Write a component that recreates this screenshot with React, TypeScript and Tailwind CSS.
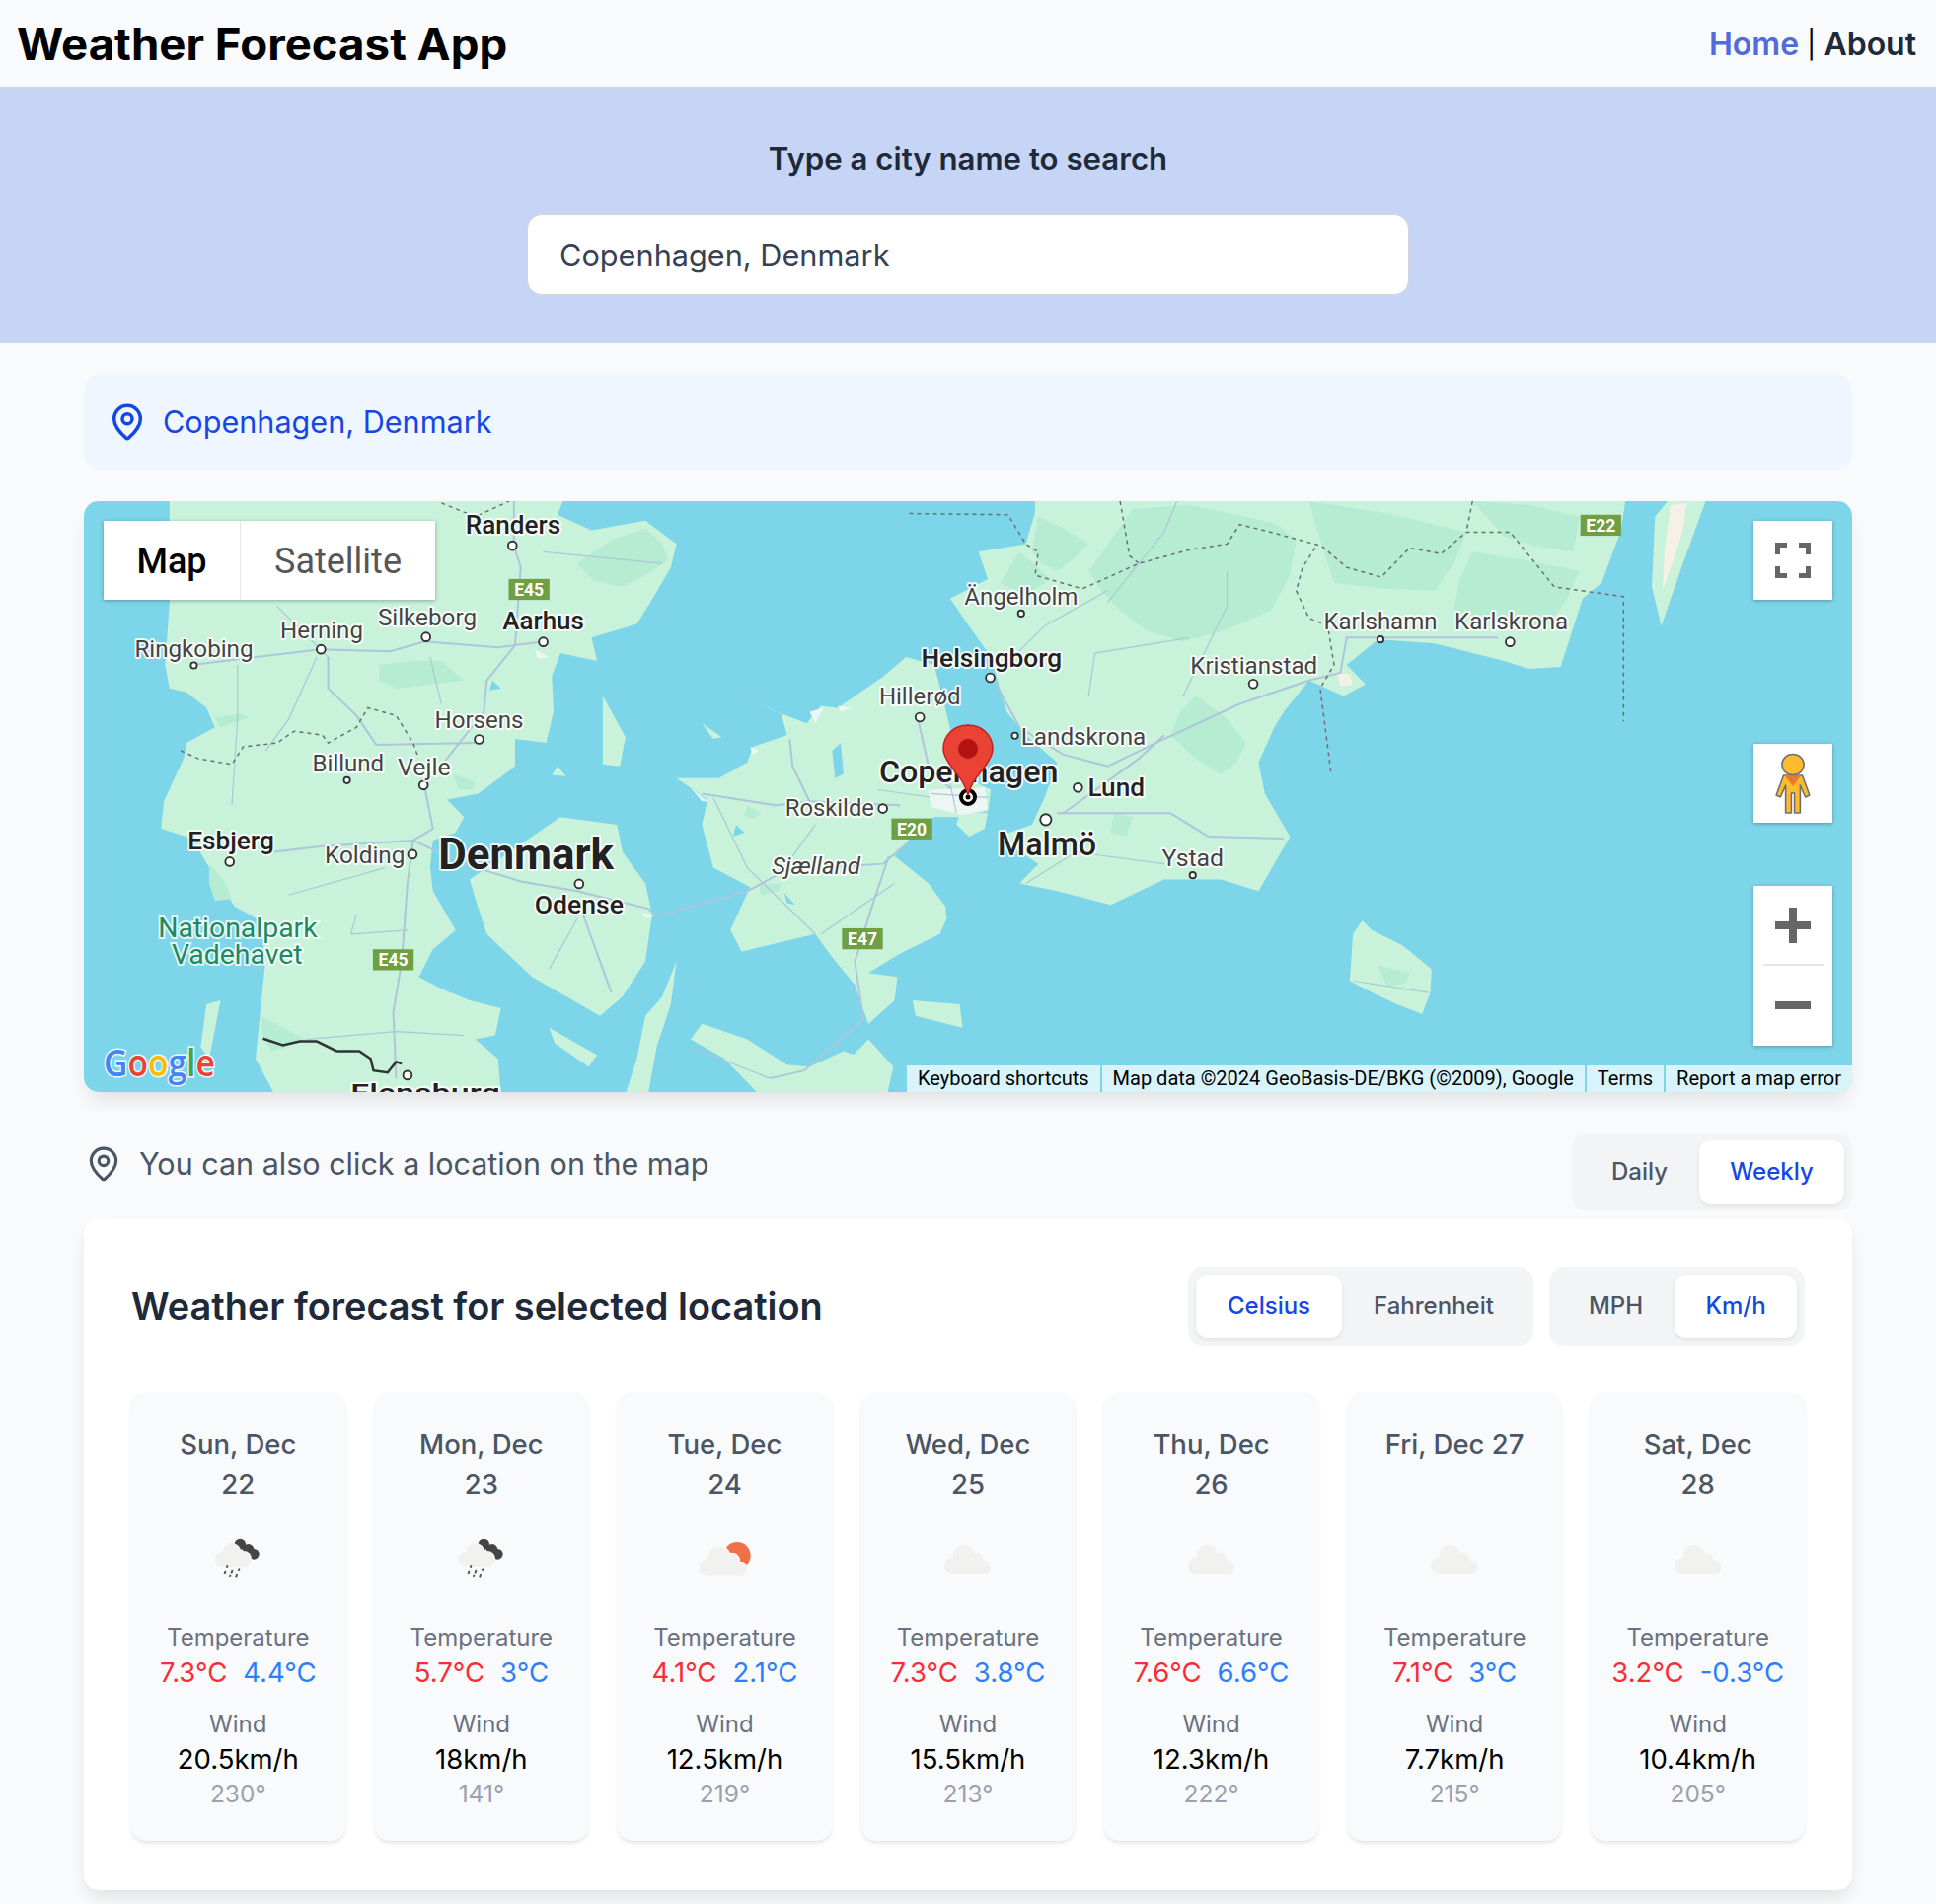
import React from 'react';
import { MapPin } from 'lucide-react';

interface Day {
  date: string; icon: 'rain' | 'sun' | 'cloud'; hi: string; lo: string; wind: string; deg: string;
}

const days: Day[] = [
  { date: 'Sun, Dec 22', icon: 'rain', hi: '7.3°C', lo: '4.4°C', wind: '20.5km/h', deg: '230°' },
  { date: 'Mon, Dec 23', icon: 'rain', hi: '5.7°C', lo: '3°C', wind: '18km/h', deg: '141°' },
  { date: 'Tue, Dec 24', icon: 'sun', hi: '4.1°C', lo: '2.1°C', wind: '12.5km/h', deg: '219°' },
  { date: 'Wed, Dec 25', icon: 'cloud', hi: '7.3°C', lo: '3.8°C', wind: '15.5km/h', deg: '213°' },
  { date: 'Thu, Dec 26', icon: 'cloud', hi: '7.6°C', lo: '6.6°C', wind: '12.3km/h', deg: '222°' },
  { date: 'Fri, Dec 27', icon: 'cloud', hi: '7.1°C', lo: '3°C', wind: '7.7km/h', deg: '215°' },
  { date: 'Sat, Dec 28', icon: 'cloud', hi: '3.2°C', lo: '-0.3°C', wind: '10.4km/h', deg: '205°' },
];

// map geometry, traced from the picture: group A covers the danish half, group B the swedish half
const landA = [
  '160,0 860,0 845,55 905,95 1000,70 1055,130 1045,190 1015,265 985,335 905,370 915,430 850,410 835,470 838,560 825,640 770,630 770,700 705,770 650,785 680,830 665,870 625,890 620,960 625,1020 645,1070 665,1120 625,1170 600,1240 640,1270 690,1300 745,1320 735,1390 700,1400 740,1450 745,1540 345,1540 312,1450 322,1300 330,1190 320,1095 275,1060 230,960 200,885 145,860 150,790 185,680 190,640 240,600 225,550 190,510 160,500 152,440 160,280',
  '690,990 760,920 850,830 950,850 960,920 1000,1000 1012,1080 1000,1200 960,1290 920,1340 860,1290 800,1240 720,1130 700,1040',
  '1165,520 1250,570 1285,590 1310,545 1340,550 1420,470 1460,420 1510,440 1538,600 1540,710 1610,760 1605,815 1550,830 1510,830 1470,880 1440,930 1500,1000 1530,1060 1532,1090 1520,1130 1450,1180 1394,1230 1445,1240 1440,1300 1394,1360 1390,1345 1370,1260 1330,1190 1300,1130 1170,1175 1150,1120 1185,1010 1120,960 1100,850 1110,785 1055,730 1130,730 1180,690 1190,650 1250,620 1240,565',
  '1472,1300 1555,1310 1560,1370 1477,1340',
  '1394,1400 1438,1470 1427,1540 1300,1540',
  '1080,1400 1100,1360 1180,1400 1250,1465 1290,1470 1350,1430 1390,1450 1350,1540 1200,1540 1140,1450',
  '1055,1200 1030,1290 1000,1340 985,1450 965,1540 1005,1540 1020,1420 1045,1310',
  '830,1370 915,1440 900,1470 840,1410',
  '925,520 965,625 955,700 925,695 925,620',
  '1100,590 1135,625 1120,630',
  '845,700 860,725 835,722',
  '225,1310 250,1300 230,1450 215,1420',
];

const forestA = [
  '880,180 940,120 1000,90 1030,130 1040,170 1000,210 960,240 910,225',
  '530,440 590,430 640,430 680,480 620,490 560,500 530,480',
  '230,950 255,990 270,1040 240,1045 230,1000',
  '1180,800 1205,820 1190,835 1175,825',
  '1200,1000 1240,1000 1235,1020 1205,1030',
  '320,1340 360,1370 400,1400 365,1420 340,1430 325,1390',
  '240,575 285,565 300,575 250,600',
  '660,720 700,740 695,760 670,760',
];

// small inlets and the pale sand flecks on the coast
const waterA = [
  '1160,850 1175,870 1155,880',
  '1245,1025 1265,1055 1250,1050',
  '730,480 745,500 725,505',
  '1330,660 1345,640 1350,720 1335,730',
  '675,1010 690,1030 680,1045',
];

const sandA = [
  '1185,650 1200,660 1190,672',
  '1290,560 1315,550 1300,590',
  '1340,545 1365,550 1345,560',
  '1080,755 1110,790 1100,790',
  '995,1075 1015,1085 1000,1090',
  '805,400 830,420 810,425',
];

const landB = [
  '265,0 1205,0 1195,100 1165,230 1135,270 1100,445 1050,450 1010,430 950,405 900,385 810,375 760,440 790,490 755,520 700,480 660,560 645,600 620,690 630,770 670,880 620,1020 560,990 470,990 385,1055 300,1020 240,1000 270,950 205,880 260,850 280,780 300,690 250,620 220,560 205,480 195,420 160,340 130,270 190,220 175,150 250,130 265,50',
  '145,820 190,820 185,860 160,880 140,850',
  '785,1095 800,1120 850,1160 895,1220 893,1280 880,1335 840,1310 800,1280 765,1250 768,1180 770,1130',
  '1250,60 1280,0 1335,0 1290,200 1260,340 1245,240',
];

const forestB = [
  '420,40 510,30 600,60 650,80 680,120 670,210 640,300 570,350 500,380 440,350 400,300 370,250 350,200 390,110',
  '700,20 820,50 950,100 930,180 900,250 820,245 740,230 720,130',
  '960,150 1040,170 1130,200 1110,270 1080,340 1000,330 930,300 940,220',
  '270,60 310,90 350,130 325,170 300,200 275,180 260,150',
  '520,520 565,570 600,640 585,690 560,720 520,680 480,620 495,560',
  '390,820 420,830 410,880 385,870',
  '810,1210 860,1230 855,1255 825,1265',
  '960,20 1050,30 1130,60 1120,150 1060,135 1010,110',
  '240,150 290,220 250,260 210,230',
];

const sandB = [
  '1275,30 1300,25 1295,90 1280,170 1262,250 1265,150',
  '745,460 765,465 770,490 750,495',
];

const mainRoadsA = [
  '768,0 768,135 780,190 770,390 720,480 715,560 650,680 610,750 625,860 590,890 580,1000 570,1200 555,1330 560,1500',
  '200,440 425,400 550,405 610,380 740,395 820,380',
  '440,420 440,500 490,570 525,645 700,640',
  '340,920 430,905 590,890',
  '590,890 680,950 780,995 880,1020 1005,1065 1020,1085 1180,1020 1250,965 1420,950 1460,900',
  '890,1080 940,1280',
  '1100,770 1230,800 1290,790 1260,700 1255,630',
  '1450,800 1290,790',
  '1430,930 1400,1060 1370,1200 1385,1350 1280,1480 1220,1500',
  '1480,570 1500,700 1560,790',
];

const minorRoadsA = [
  '400,1400 560,1380 680,1390',
  '280,440 280,580 270,800',
  '1080,1420 1220,1500',
  '350,290 440,420',
  '620,420 640,540',
  '830,1220 880,1090',
  '1120,780 1180,960 1300,1130',
  '1300,850 1250,950',
  '1440,1000 1310,1130',
  '480,1130 580,1120',
  '370,1030 540,960',
  '490,1080 480,1130',
  '420,420 370,580 330,660',
  '820,150 1030,180',
  '1410,760 1605,800',
];

const mainRoadsB = [
  '200,480 240,600 310,670 380,700 470,630 590,540 700,480 750,460 760,370 1000,370',
  '300,820 480,820 540,880 660,885',
  '310,820 430,680 470,620',
];

const minorRoadsB = [
  '250,1000 290,960 330,920 470,950',
  '380,250 280,340 230,420',
  '510,370 360,410 350,520',
  '490,20 470,100 380,280',
  '770,1250 890,1280',
  '100,770 190,780',
  '130,745 140,820',
  '570,200 570,290 500,520',
];

const labels = [
  { t: 'Randers', x: 377, y: 432, w: 77, s: 20, b: 500 },
  { t: 'Aarhus', x: 407, y: 510, w: 66, s: 21, b: 500 },
  { t: 'Silkeborg', x: 306, y: 507, w: 80, s: 19, b: 400 },
  { t: 'Herning', x: 227, y: 517, w: 67, s: 19, b: 400 },
  { t: 'Ringkobing', x: 109, y: 532, w: 96, s: 19, b: 400 },
  { t: 'Horsens', x: 352, y: 590, w: 72, s: 19, b: 400 },
  { t: 'Billund', x: 253, y: 625, w: 58, s: 19, b: 400 },
  { t: 'Vejle', x: 322, y: 628, w: 43, s: 19, b: 400 },
  { t: 'Esbjerg', x: 152, y: 688, w: 70, s: 21, b: 500 },
  { t: 'Kolding', x: 263, y: 699, w: 65, s: 19, b: 400 },
  { t: 'Denmark', x: 355, y: 704, w: 142, s: 35, b: 700 },
  { t: 'Odense', x: 433, y: 740, w: 72, s: 21, b: 500 },
  { t: 'Flensburg', x: 284, y: 893, w: 121, s: 21, b: 500 },
  { t: 'Roskilde', x: 636, y: 661, w: 72, s: 19, b: 400 },
  { t: 'Hillerød', x: 712, y: 571, w: 66, s: 19, b: 400 },
  { t: 'Helsingborg', x: 746, y: 540, w: 114, s: 21, b: 500 },
  { t: 'Ängelholm', x: 781, y: 490, w: 92, s: 19, b: 400 },
  { t: 'Landskrona', x: 827, y: 603, w: 101, s: 19, b: 400 },
  { t: 'Copenhagen', x: 712, y: 634, w: 145, s: 25, b: 500 },
  { t: 'Lund', x: 881, y: 645, w: 46, s: 21, b: 500 },
  { t: 'Malmö', x: 808, y: 693, w: 80, s: 27, b: 500 },
  { t: 'Ystad', x: 941, y: 702, w: 50, s: 19, b: 400 },
  { t: 'Kristianstad', x: 964, y: 546, w: 103, s: 19, b: 400 },
  { t: 'Karlshamn', x: 1072, y: 510, w: 92, s: 19, b: 400 },
  { t: 'Karlskrona', x: 1178, y: 510, w: 92, s: 19, b: 400 },
];

const dots = [
  [415, 442, 3.5], [440, 520, 3.5], [345, 516, 3.5], [260, 526, 3.5], [157, 539, 2.5], [388, 599, 3.5],
  [281, 632, 2.5], [343, 636, 3.5], [186, 698, 3.5], [334, 692, 3.5], [469, 716, 3.5], [330, 871, 3.5],
  [715, 655, 3.5], [745, 581, 3.5], [802, 549, 3.5], [827, 497, 2.5], [822, 596, 2.5], [873, 638, 3.5],
  [847, 664, 4.5], [966, 709, 2.5], [1015, 554, 3.5], [1118, 518, 2.5], [1223, 520, 3.5],
];

const shields = [
  { t: 'E45', x: 412, y: 469 }, { t: 'E45', x: 302, y: 769 }, { t: 'E20', x: 722, y: 663 },
  { t: 'E47', x: 682, y: 752 }, { t: 'E22', x: 1280, y: 417 },
];

function Lines({ items, width, color }: { items: string[]; width: number; color: string }) {
  return (
    <>
      {items.map((p) => (
        <polyline key={p} points={p} fill="none" stroke={color} strokeWidth={width} vectorEffect="non-scaling-stroke" />
      ))}
    </>
  );
}

function Shapes({ items, fill }: { items: string[]; fill: string }) {
  return (
    <>
      {items.map((p) => <polygon key={p} points={p} fill={fill} />)}
    </>
  );
}

function MapCanvas() {
  return (
    <svg viewBox="85 508 1792 599" className="block h-full w-full">
      <rect x="85" y="508" width="1792" height="600" fill="#7dd5e9" />
      <g transform="translate(80 500) scale(0.574 0.3954)">
        <Shapes items={landA} fill="#c8f2da" />
        <Shapes items={forestA} fill="#b6ecd1" />
        <Shapes items={waterA} fill="#7dd5e9" />
        <Shapes items={sandA} fill="#eef6f3" />
        <Lines items={minorRoadsA} width={1.2} color="#aac8d8" />
        <Lines items={mainRoadsA} width={2} color="#aec5da" />
        <polyline points="180,660 210,680 270,695 290,650 350,640 380,610 430,620 440,640 490,600 510,550 560,570 590,640 600,680" fill="none" stroke="#6b6f73" strokeWidth="1.5" strokeDasharray="4 4" vectorEffect="non-scaling-stroke" />
        <polyline points="640,25 700,60 760,20" fill="none" stroke="#6b6f73" strokeWidth="1.5" strokeDasharray="4 4" vectorEffect="non-scaling-stroke" />
        <polyline points="325,1398 360,1415 390,1405 420,1405 455,1430 495,1430 515,1450 520,1480 545,1485 560,1458 570,1462" fill="none" stroke="#2f3336" strokeWidth="2.5" vectorEffect="non-scaling-stroke" />
      </g>
      <g transform="translate(880 500) scale(0.6378 0.3954)">
        <Shapes items={landB} fill="#c8f2da" />
        <Shapes items={forestB} fill="#b6ecd1" />
        <Shapes items={sandB} fill="#f5f1e6" />
        <polygon points="95,760 185,755 190,810 150,825 100,805" fill="#eef6f3" />
        <Lines items={minorRoadsB} width={1.2} color="#aac8d8" />
        <Lines items={mainRoadsB} width={2} color="#aec5da" />
        <polyline points="65,52 222,55 250,130 270,150 265,210 340,245 430,180 510,145 570,130 590,80 640,100 720,135 760,190 815,215 860,140 910,155 950,100 1020,100 1090,240 1200,265 1200,585" fill="none" stroke="#6b6f73" strokeWidth="1.5" strokeDasharray="4 4" vectorEffect="non-scaling-stroke" />
        <polyline points="400,20 415,160 430,180" fill="none" stroke="#6b6f73" strokeWidth="1.5" strokeDasharray="4 4" vectorEffect="non-scaling-stroke" />
        <polyline points="710,140 690,190 680,250 700,320 730,340 740,440 718,500 735,715" fill="none" stroke="#6b6f73" strokeWidth="1.5" strokeDasharray="4 4" vectorEffect="non-scaling-stroke" />
        <polyline points="960,20 950,100" fill="none" stroke="#6b6f73" strokeWidth="1.5" strokeDasharray="4 4" vectorEffect="non-scaling-stroke" />
      </g>
      <g transform="scale(1.2513)" fontFamily="Roboto, sans-serif">
        {shields.map((s) => (
          <g key={`${s.t}${s.x}`}>
            <rect x={s.x} y={s.y} width="33" height="17" fill="#6f9e43" />
            <text x={s.x + 16.5} y={s.y + 13.5} textAnchor="middle" fontSize="14" fontWeight="700" fill="#fff">{s.t}</text>
          </g>
        ))}
        {dots.map(([x, y, r]) => (
          <circle key={`${x}-${y}`} cx={x} cy={y} r={r} fill="#fff" stroke="#333" strokeWidth="1.5" />
        ))}
        {labels.map((l) => (
          <text key={l.t} x={l.x} y={l.y} fontSize={l.s} fontWeight={l.b} textLength={l.w} lengthAdjust="spacingAndGlyphs" fill={l.b === 400 ? '#444' : '#222'} stroke="#fff" strokeWidth="3" strokeOpacity="0.9" paintOrder="stroke" strokeLinejoin="round">
            {l.t}
          </text>
        ))}
        <g fill="#1d8a5f" stroke="#fff" strokeWidth="3" strokeOpacity="0.8" paintOrder="stroke" fontSize="22">
          <text x="128" y="759" textLength="129" lengthAdjust="spacingAndGlyphs">Nationalpark</text>
          <text x="139" y="781" textLength="106" lengthAdjust="spacingAndGlyphs">Vadehavet</text>
        </g>
        <text x="625" y="708" fontSize="19" fontStyle="italic" textLength="72" lengthAdjust="spacingAndGlyphs" fill="#444" stroke="#fff" strokeWidth="3" strokeOpacity="0.9" paintOrder="stroke">Sjælland</text>
        <text x="84" y="872" fontFamily="'Open Sans', sans-serif" fontSize="30" fontWeight="600" textLength="90" lengthAdjust="spacingAndGlyphs" stroke="#fff" strokeWidth="2.5" strokeOpacity="0.9" paintOrder="stroke">
          <tspan fill="#4285f4">G</tspan><tspan fill="#ea4335">o</tspan><tspan fill="#fbbc05">o</tspan><tspan fill="#4285f4">g</tspan><tspan fill="#34a853">l</tspan><tspan fill="#ea4335">e</tspan>
        </text>
      </g>
      <circle cx="981" cy="808" r="7" fill="#fff" stroke="#000" strokeWidth="4" />
      <circle cx="981" cy="808" r="2.5" fill="#000" />
      <path d="M981 806 C977 790 968 784 962 774 C958 768 956 764 956 759 C956 745 967 735 981 735 C995 735 1006 745 1006 759 C1006 764 1004 768 1000 774 C994 784 985 790 981 806 Z" fill="#ea4335" stroke="#c5221f" strokeWidth="1.5" />
      <circle cx="981" cy="759" r="10" fill="#b31412" />
    </svg>
  );
}

function Pegman() {
  return (
    <svg width="38" height="63" viewBox="0 0 36 63" preserveAspectRatio="none" className="block">
      <path d="M9 23 H27 L34 43 L30 45 L25 33 V61 H19.5 V41 H16.5 V61 H11 V33 L6 45 L2 43 Z" fill="#fdbb2d" stroke="#6f6f6f" strokeWidth="1.5" strokeLinejoin="round" />
      <path d="M10 23 H26 L18 34 Z" fill="#e8792d" />
      <circle cx="18" cy="12" r="10.5" fill="#fdbb2d" stroke="#6f6f6f" strokeWidth="1.5" />
    </svg>
  );
}

function FullscreenIcon() {
  return (
    <svg width="36" height="36" viewBox="0 0 36 36" fill="#666" className="block">
      <path d="M0 0 H12 V5 H5 V12 H0 Z M24 0 H36 V12 H31 V5 H24 Z M0 24 H5 V31 H12 V36 H0 Z M31 24 H36 V36 H24 V31 H31 Z" />
    </svg>
  );
}

function WeatherIcon({ kind }: { kind: Day['icon'] }) {
  return (
    <svg width="120" height="70" viewBox="0 0 360 210" className="block">
      {kind === 'rain' && (
        <g transform="translate(57 0)">
          <g fill="#444">
            <circle cx="130" cy="76" r="17" />
            <circle cx="155" cy="92" r="17" />
            <circle cx="172" cy="106" r="16" />
          </g>
          <g fill="#f1f1ef">
            <circle cx="75" cy="121" r="22" />
            <circle cx="105" cy="100" r="28" />
            <circle cx="141" cy="120" r="24" />
            <rect x="75" y="115" width="75" height="28" />
          </g>
          <g stroke="#555" strokeWidth="6" strokeLinecap="round">
            <path d="M91 141 l-1 3 M106 155 l-2 6 M127 151 l-1 2 M85 158 l-2 6 M100 173 l-1 1 M120 170 l-2 6" />
          </g>
        </g>
      )}
      {kind === 'sun' && (
        <g transform="translate(49 0)">
          <circle cx="170" cy="110" r="41" fill="#f07048" />
          <g fill="#f9fafb" stroke="#f9fafb" strokeWidth="8">
            <circle cx="115" cy="115" r="32" />
            <circle cx="155" cy="125" r="20" />
            <circle cx="180" cy="152" r="20" />
          </g>
          <g fill="#f1f1ef">
            <circle cx="80" cy="147" r="25" />
            <circle cx="115" cy="115" r="32" />
            <circle cx="155" cy="125" r="20" />
            <circle cx="180" cy="152" r="20" />
            <rect x="80" y="130" width="100" height="42" />
          </g>
        </g>
      )}
      {kind === 'cloud' && (
        <g transform="translate(25 0)" fill="#f1f1ef">
          <circle cx="107" cy="141" r="24" />
          <circle cx="142" cy="110" r="32" />
          <circle cx="183" cy="120" r="18" />
          <circle cx="205" cy="145" r="20" />
          <rect x="107" y="125" width="98" height="40" />
        </g>
      )}
    </svg>
  );
}

function Segmented({ items, active }: { items: { label: string; w: string }[]; active: string }) {
  return (
    <div className="flex h-[80px] items-center rounded-[15px] bg-gray-100 px-[8px]">
      {items.map((it) => (
        <div
          key={it.label}
          className={`flex h-[64px] items-center justify-center rounded-[12px] text-[24px] font-medium ${it.w} ${
            it.label === active ? 'bg-white text-blue-700 shadow-[0_2px_4px_rgba(0,0,0,0.08)]' : 'text-gray-600'
          }`}
        >
          {it.label}
        </div>
      ))}
    </div>
  );
}

export default function App() {
  return (
    <div className="min-h-[1930px] bg-gray-50 font-['Inter',sans-serif]">
      <header className="flex h-[88px] items-center justify-between pl-[17px] pr-[20px] pt-[2px]">
        <h1 className="text-[45.6px] font-bold text-black">Weather Forecast App</h1>
        <nav className="flex items-center gap-[8px] text-[32px] font-semibold text-black">
          <span className="text-[#4f6bdc]">Home</span>
          <span className="text-[28px] font-normal">|</span>
          <span className="text-gray-800">About</span>
        </nav>
      </header>

      <section className="flex h-[260px] flex-col items-center bg-[#c6d5f5] pt-[53px]">
        <h2 className="h-[40px] text-[31.2px] font-semibold leading-[40px] text-gray-800">Type a city name to search</h2>
        <input
          readOnly
          value="Copenhagen, Denmark"
          className="mt-[36px] h-[82px] w-[894px] rounded-[15px] border border-gray-300 bg-white px-[32px] text-[30.7px] text-gray-700 outline-none"
        />
      </section>

      <main className="px-[85px] pt-[32px]">
        <div className="flex h-[96px] items-center gap-[16px] rounded-[15px] bg-blue-50 pl-[24px] text-[30.6px] text-blue-700">
          <MapPin size={40} strokeWidth={2.1} />
          <span>Copenhagen, Denmark</span>
        </div>

        <div className="relative mt-[32px] h-[599px] overflow-hidden rounded-[15px] shadow-[0_12px_20px_-4px_rgba(0,0,0,0.1)]">
          <MapCanvas />

          <div className="absolute left-[20px] top-[20px] flex h-[80px] bg-white font-['Roboto',sans-serif] text-[36px] shadow-[0_1px_4px_rgba(0,0,0,0.3)]">
            <div className="flex w-[139px] items-center justify-center border-r border-gray-200 pt-[2px] font-medium text-black">Map</div>
            <div className="flex w-[197px] items-center justify-center pt-[2px] text-[#565656]">Satellite</div>
          </div>

          <div className="absolute left-[1692px] top-[20px] flex h-[80px] w-[80px] items-center justify-center bg-white shadow-[0_1px_4px_rgba(0,0,0,0.3)]">
            <FullscreenIcon />
          </div>

          <div className="absolute left-[1692px] top-[246px] flex h-[80px] w-[80px] items-center justify-center bg-white shadow-[0_1px_4px_rgba(0,0,0,0.3)]">
            <Pegman />
          </div>

          <div className="absolute left-[1692px] top-[390px] flex h-[162px] w-[80px] flex-col items-center bg-white shadow-[0_1px_4px_rgba(0,0,0,0.3)]">
            <div className="relative mt-[22px] h-[36px] w-[36px]">
              <div className="absolute left-0 top-[14px] h-[8px] w-[36px] bg-[#666]" />
              <div className="absolute left-[14px] top-0 h-[36px] w-[8px] bg-[#666]" />
            </div>
            <div className="mt-[21px] h-[2px] w-[61px] bg-[#e6e6e6]" />
            <div className="mt-[36px] h-[8px] w-[36px] bg-[#666]" />
          </div>

          <div className="absolute bottom-0 right-0 flex h-[27px] gap-[2px] font-['Roboto',sans-serif] text-[20px] leading-[27px] text-black">
            <div className="bg-white/70 px-[11px]">Keyboard shortcuts</div>
            <div className="bg-white/70 px-[11px]">Map data ©2024 GeoBasis-DE/BKG (©2009), Google</div>
            <div className="bg-white/70 px-[11px]">Terms</div>
            <div className="bg-white/70 px-[11px]">Report a map error</div>
          </div>
        </div>

        <div className="mt-[41px] flex h-[80px] items-start justify-between">
          <div className="mt-[12px] flex items-center gap-[17px] pl-[1px] text-[30.5px] leading-[40px] text-gray-600">
            <MapPin size={38} strokeWidth={2} />
            <span>You can also click a location on the map</span>
          </div>
          <Segmented active="Weekly" items={[{ label: 'Daily', w: 'w-[121px]' }, { label: 'Weekly', w: 'w-[147px]' }]} />
        </div>

        <div className="mt-[8px] rounded-[15px] bg-white px-[48px] pb-[50px] pt-[48px] shadow-[0_10px_18px_-3px_rgba(0,0,0,0.1)]">
          <div className="flex h-[80px] items-center justify-between">
            <h2 className="text-[37.9px] font-semibold text-gray-800">Weather forecast for selected location</h2>
            <div className="flex gap-[16px]">
              <Segmented active="Celsius" items={[{ label: 'Celsius', w: 'w-[148px]' }, { label: 'Fahrenheit', w: 'w-[186px]' }]} />
              <Segmented active="Km/h" items={[{ label: 'MPH', w: 'w-[119px]' }, { label: 'Km/h', w: 'w-[124px]' }]} />
            </div>
          </div>

          <div className="mt-[47px] grid grid-cols-7 gap-[30px]">
            {days.map((d) => (
              <div key={d.date} className="flex h-[455px] flex-col items-center rounded-[15px] bg-gray-50 pt-[33px] text-center shadow-[0_3px_5px_-1px_rgba(0,0,0,0.12)]">
                <div className="h-[80px] w-[150px] text-[27.5px] font-medium leading-[40px] text-gray-600">{d.date}</div>
                <div className="mt-[16px]"><WeatherIcon kind={d.icon} /></div>
                <div className="mt-[32px] text-[24px] leading-[35px] text-gray-500">Temperature</div>
                <div className="flex gap-[16px] text-[27.5px] leading-[36px]">
                  <span className="text-red-500">{d.hi}</span>
                  <span className="text-blue-500">{d.lo}</span>
                </div>
                <div className="mt-[17px] text-[24px] leading-[35px] text-gray-500">Wind</div>
                <div className="text-[27.5px] leading-[36px] text-black">{d.wind}</div>
                <div className="text-[24.5px] leading-[35px] text-gray-400">{d.deg}</div>
              </div>
            ))}
          </div>
        </div>
      </main>
    </div>
  );
}
